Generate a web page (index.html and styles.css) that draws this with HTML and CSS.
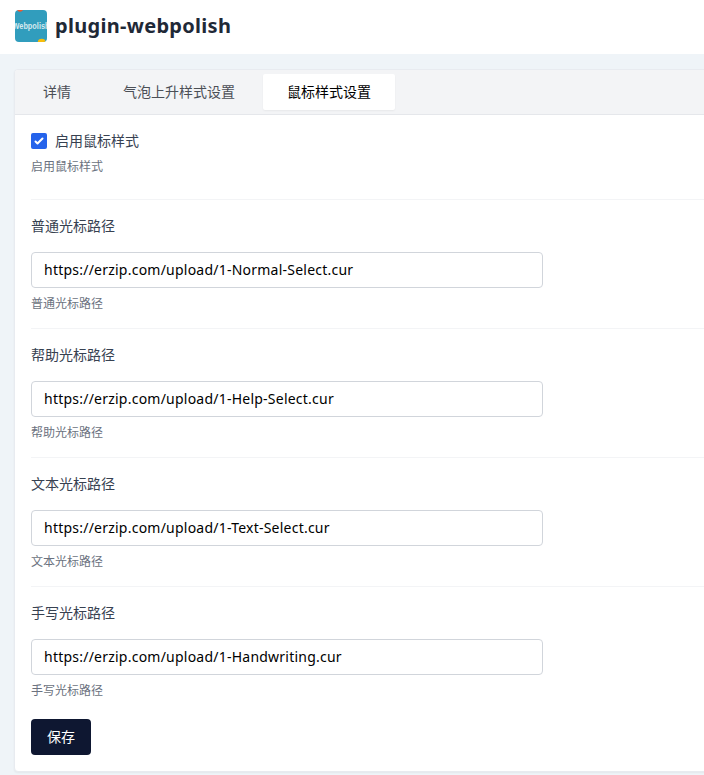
FILE: index.html
```html
<!DOCTYPE html>
<html lang="zh-CN">
<head>
<meta charset="utf-8">
<title>plugin-webpolish</title>
<link rel="stylesheet" href="styles.css">
</head>
<body>
<header class="header">
  <svg class="logo" width="32" height="32" viewBox="0 0 32 32">
    <rect width="32" height="32" fill="#319dbd"/>
    <circle cx="5" cy="-1.5" r="3.2" fill="#f4572b"/>
    <circle cx="26.7" cy="32.8" r="4" fill="#f8bd0a"/>
    <text class="logo-text" x="16" y="19" text-anchor="middle" textLength="37" lengthAdjust="spacingAndGlyphs">Webpolish</text>
  </svg>
  <h1 class="title"><span>plugin-webpolish</span></h1>
</header>
<main class="card">
  <nav class="tabs">
    <a class="tab">详情</a>
    <a class="tab">气泡上升样式设置</a>
    <a class="tab active">鼠标样式设置</a>
  </nav>
  <form class="form">
    <div class="switch">
      <label class="check-row">
        <svg class="check" width="16" height="16" viewBox="0 0 16 16"><rect width="16" height="16" rx="2" fill="#2563eb"/><path fill="#fff" d="M12.207 4.793a1 1 0 010 1.414l-5 5a1 1 0 01-1.414 0l-2-2a1 1 0 011.414-1.414L6.5 9.086l4.293-4.293a1 1 0 011.414 0z"/></svg>
        <span class="label">启用鼠标样式</span>
      </label>
      <p class="help">启用鼠标样式</p>
    </div>
    <div class="field">
      <label class="label">普通光标路径</label>
      <input class="input" type="text" value="https://erzip.com/upload/1-Normal-Select.cur">
      <p class="help">普通光标路径</p>
    </div>
    <div class="field">
      <label class="label">帮助光标路径</label>
      <input class="input" type="text" value="https://erzip.com/upload/1-Help-Select.cur">
      <p class="help">帮助光标路径</p>
    </div>
    <div class="field">
      <label class="label">文本光标路径</label>
      <input class="input" type="text" value="https://erzip.com/upload/1-Text-Select.cur">
      <p class="help">文本光标路径</p>
    </div>
    <div class="field">
      <label class="label">手写光标路径</label>
      <input class="input" type="text" value="https://erzip.com/upload/1-Handwriting.cur">
      <p class="help">手写光标路径</p>
    </div>
    <button class="save" type="button">保存</button>
  </form>
</main>
</body>
</html>
```
FILE: styles.css
```css
* { box-sizing: border-box; }
body {
  margin: 0;
  min-height: 775px;
  background: #eff4f8;
  font: 14px/20px "Noto Sans", "Noto Sans CJK SC", sans-serif;
  color: #374151;
  overflow: hidden;
}
.header {
  display: flex;
  align-items: center;
  gap: 8px;
  height: 54px;
  padding: 0 15px 2px;
  background: #fff;
}
.logo { border-radius: 4px; }
.logo-text { font: bold 8.5px "Liberation Sans", sans-serif; fill: #d5e9ef; }
.title {
  margin: 0;
  font-size: 20px;
  line-height: 28px;
  font-weight: 700;
  letter-spacing: 0.3px;
  color: #1f2937;
}
.card {
  margin: 15px -24px 0 14px;
  border: 1px solid #e8ebf0;
  border-radius: 4px;
  background: #fff;
  box-shadow: 0 1px 2px rgba(0, 0, 0, .05);
  overflow: hidden;
}
.tabs {
  display: flex;
  gap: 4px;
  height: 45px;
  padding: 4px;
  background: #f3f4f6;
  border-bottom: 1px solid #e5e7eb;
}
.tab {
  height: 36px;
  padding: 0 24px;
  line-height: 36px;
  border-radius: 2px;
  color: #4b4f56;
}
.tab.active {
  background: #fff;
  color: #000;
  box-shadow: 0 1px 2px rgba(0, 0, 0, .05);
}
.form { padding: 16px; }
.switch { padding-bottom: 24px; }
.check-row { display: flex; align-items: center; gap: 8px; }
.label { display: block; }
.help {
  margin: 8px 0 0;
  font-size: 12px;
  line-height: 16px;
  color: #6b7280;
}
.field { height: 129px; padding-top: 16px; border-top: 1px solid #f3f4f6; }
.input {
  display: block;
  width: 512px;
  height: 36px;
  margin-top: 16px;
  padding: 0 12px 2px;
  border: 1px solid #d1d5db;
  border-radius: 4px;
  background: #fff;
  color: #000;
  font: 14px "Noto Sans", sans-serif;
  letter-spacing: 0.23px;
}
.save {
  display: block;
  width: 60px;
  height: 36px;
  margin-top: 4px;
  padding: 0 0 2px;
  border: 0;
  border-radius: 4px;
  background: #0e1731;
  color: #fff;
  font: 14px "Noto Sans CJK SC", sans-serif;
}
```
